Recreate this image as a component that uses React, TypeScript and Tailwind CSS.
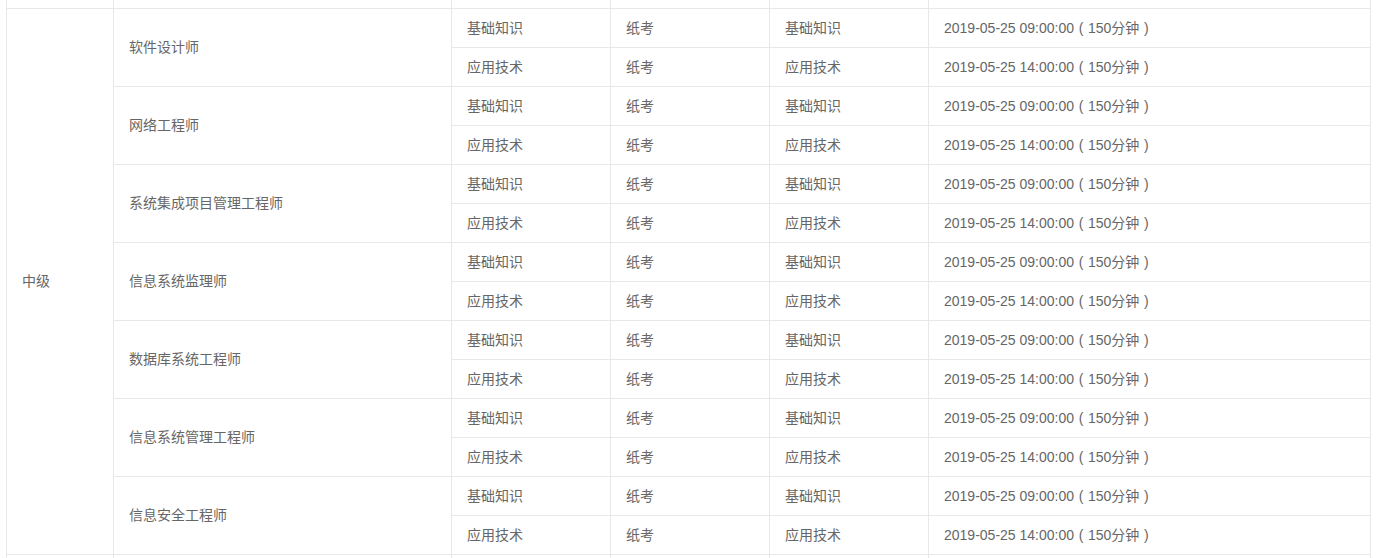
import React from "react";

const subjects = [
  "软件设计师",
  "网络工程师",
  "系统集成项目管理工程师",
  "信息系统监理师",
  "数据库系统工程师",
  "信息系统管理工程师",
  "信息安全工程师",
];

const rows = [
  { a: "基础知识", b: "纸考", c: "基础知识", t: "2019-05-25 09:00:00" },
  { a: "应用技术", b: "纸考", c: "应用技术", t: "2019-05-25 14:00:00" },
];

const line = "border-[#e8e8e8]";

function PartialRow({ h }: { h: string }) {
  return (
    <div className={`flex ${h}`}>
      <div className={`w-[107px] shrink-0 border-r ${line}`} />
      <div className={`w-[338px] shrink-0 border-r ${line}`} />
      <div className={`w-[159px] shrink-0 border-r ${line}`} />
      <div className={`w-[159px] shrink-0 border-r ${line}`} />
      <div className={`w-[159px] shrink-0 border-r ${line}`} />
      <div className={`w-[442px] shrink-0 border-r ${line}`} />
    </div>
  );
}

export default function App() {
  return (
    <div
      className="h-[558px] w-[1378px] overflow-hidden bg-white text-[14px] text-[#666666]"
      style={{ fontFamily: '"Liberation Sans", Arial, "Noto Sans CJK SC", sans-serif' }}
    >
      <div className={`ml-[6px] w-[1365px] border-l ${line}`}>
        <div className={`border-b ${line}`}>
          <PartialRow h="h-[8px]" />
        </div>
        <div className="flex">
          <div className={`flex w-[107px] shrink-0 items-center border-r border-b ${line} pl-[15px]`}>
            中级
          </div>
          <div className="flex flex-col">
            {subjects.map((s) => (
              <div key={s} className="flex">
                <div className={`flex w-[338px] shrink-0 items-center border-r border-b ${line} pl-[15px]`}>
                  {s}
                </div>
                <div className="flex flex-col">
                  {rows.map((r) => (
                    <div key={r.a} className={`flex h-[39px] border-b ${line}`}>
                      <div className={`flex w-[159px] shrink-0 items-center border-r ${line} pl-[15px]`}>
                        {r.a}
                      </div>
                      <div className={`flex w-[159px] shrink-0 items-center border-r ${line} pl-[15px]`}>
                        {r.b}
                      </div>
                      <div className={`flex w-[159px] shrink-0 items-center border-r ${line} pl-[15px]`}>
                        {r.c}
                      </div>
                      <div className={`flex w-[442px] shrink-0 items-center whitespace-pre border-r ${line} pl-[15px]`}>
                        <span>{r.t}</span>
                        <span className="inline-block w-[14px] text-center">(</span>
                        <span>150分钟</span>
                        <span className="inline-block w-[14px] text-center">)</span>
                      </div>
                    </div>
                  ))}
                </div>
              </div>
            ))}
          </div>
        </div>
        <PartialRow h="h-[20px]" />
      </div>
    </div>
  );
}
